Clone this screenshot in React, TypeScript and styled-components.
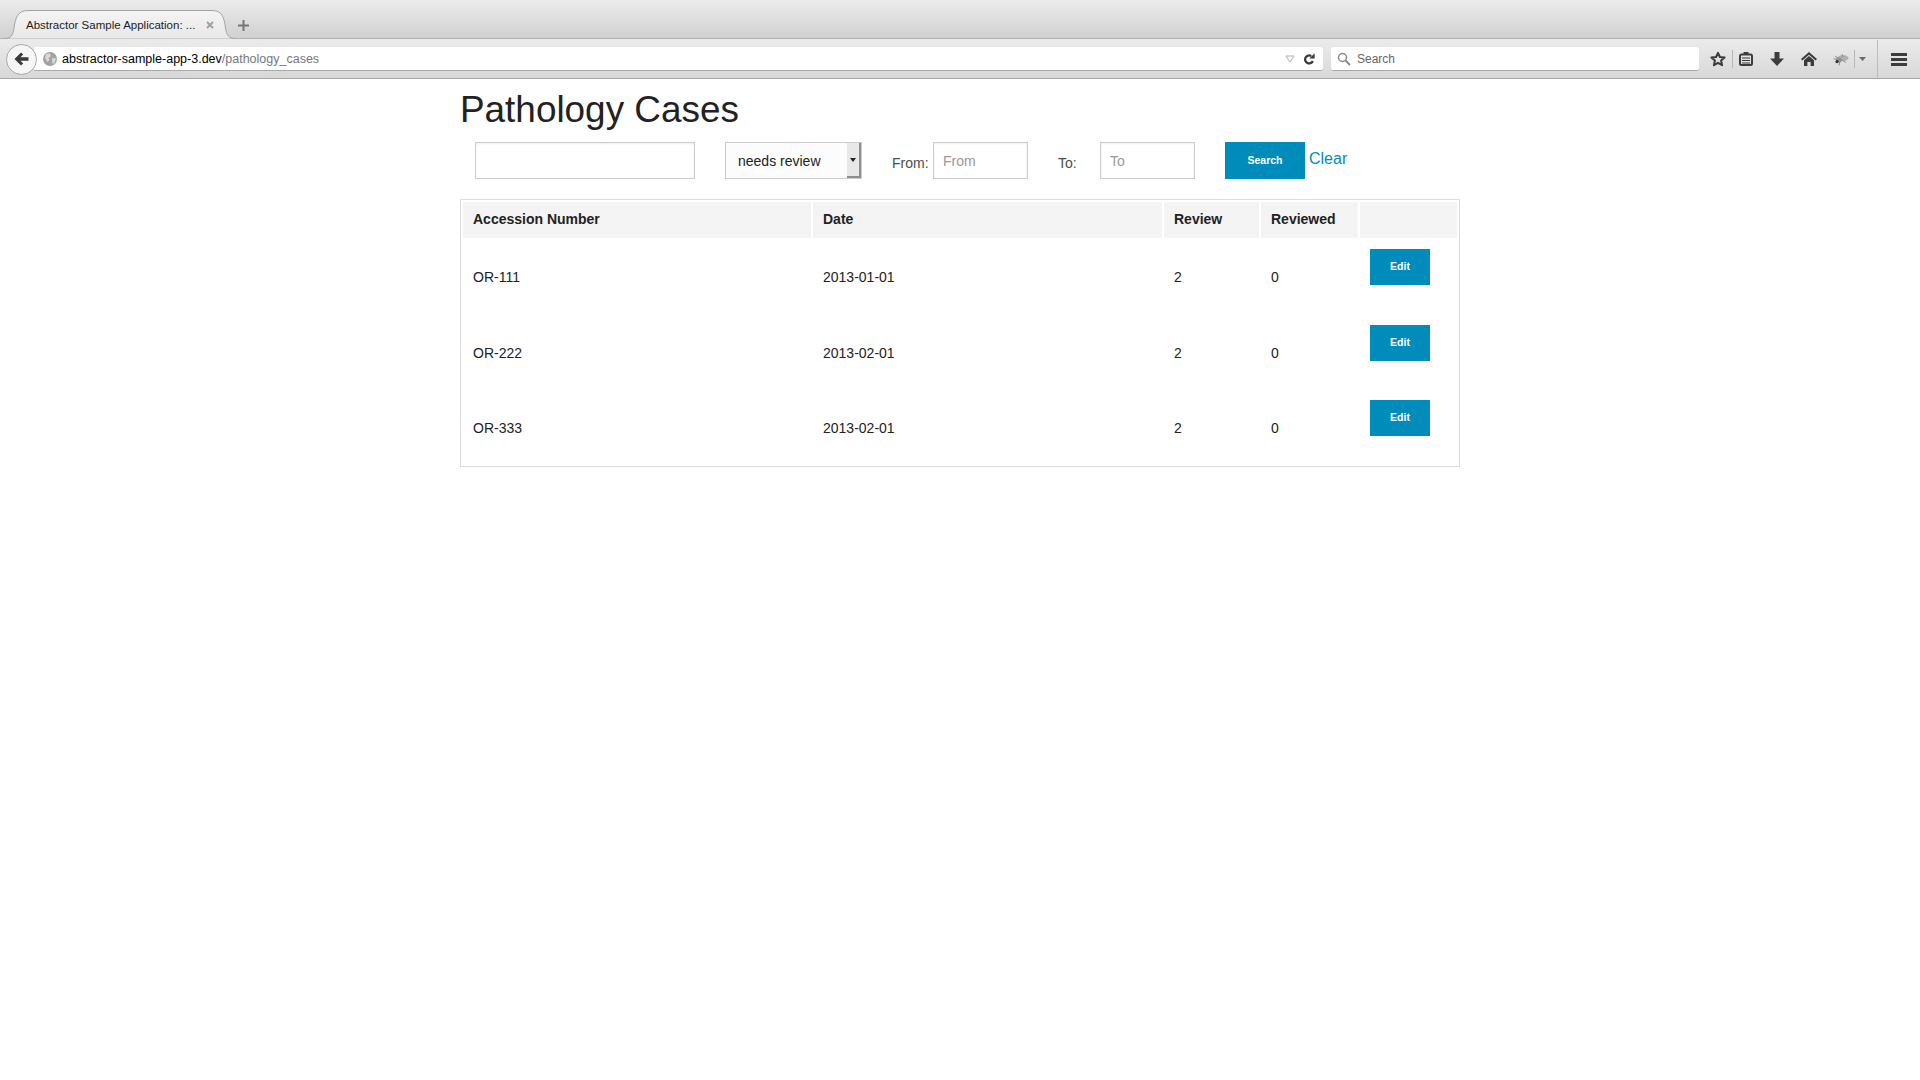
import React from 'react';
import styled, { createGlobalStyle } from 'styled-components';

const GlobalStyle = createGlobalStyle`
  html, body {
    margin: 0;
    padding: 0;
    background: #ffffff;
    font-family: "Liberation Sans", Arial, sans-serif;
  }
  * {
    box-sizing: border-box;
  }
`;

// --- Browser chrome ---

const TabStrip = styled.div`
  display: flex;
  align-items: flex-end;
  height: 39px;
  padding-left: 5px;
  background: linear-gradient(#ececec, #d0d0d0);
  border-bottom: 1px solid #b0b0b0;
`;

const Tab = styled.div`
  position: relative;
  display: flex;
  align-items: center;
  justify-content: space-between;
  width: 230px;
  height: 29px;
  margin-bottom: -1px;
  padding: 0 21px 0 21px;
  font-size: 11.5px;
  color: #222222;
`;

const TabShape = styled.svg`
  position: absolute;
  top: 0;
  left: 0;
`;

const TabLabel = styled.span`
  position: relative;
`;

const TabClose = styled.svg`
  position: relative;
`;

const NewTab = styled.svg`
  margin: 0 0 7px 3px;
`;

const Toolbar = styled.div`
  display: flex;
  align-items: center;
  height: 40px;
  padding: 1px 0 0 6px;
  background: linear-gradient(#ebebeb, #d8d8d8);
  border-bottom: 1px solid #a8a8a8;
`;

const BackButton = styled.div`
  position: relative;
  z-index: 1;
  display: flex;
  align-items: center;
  justify-content: center;
  flex: none;
  width: 31px;
  height: 31px;
  background: #f6f6f6;
  border: 1px solid #a9a9a9;
  border-radius: 50%;
`;

const UrlBar = styled.div`
  display: flex;
  align-items: center;
  flex: 1;
  height: 24px;
  margin-left: -3px;
  padding: 1px 8px 0 9px;
  background: #ffffff;
  border-bottom: 1px solid #a9a9a9;
  border-radius: 0 3px 3px 0;
  font-size: 12.5px;
`;

const UrlHost = styled.span`
  margin-left: 5px;
  color: #000000;
`;

const UrlPath = styled.span`
  flex: 1;
  color: #777777;
`;

const ReloadSlot = styled.span`
  display: flex;
  margin-left: 8px;
`;

const SearchBar = styled.div`
  display: flex;
  align-items: center;
  flex: none;
  gap: 6px;
  width: 368px;
  height: 24px;
  margin-left: 8px;
  padding: 1px 0 0 6px;
  font-size: 12px;
  color: #666666;
  background: #ffffff;
  border-bottom: 1px solid #a9a9a9;
  border-radius: 3px;
`;

const ToolIcons = styled.div`
  display: flex;
  align-items: center;
  align-self: stretch;
  flex: none;
  width: 221px;
  padding-left: 11px;
`;

const ToolIcon = styled.span<{ $width: number }>`
  display: flex;
  align-items: center;
  flex: none;
  width: ${({ $width }) => $width}px;
`;

const ToolDivider = styled.span<{ $right: number }>`
  flex: none;
  width: 1px;
  height: 18px;
  margin-right: ${({ $right }) => $right}px;
  background: #b8b8b8;
`;

const MenuDivider = styled.span`
  flex: none;
  align-self: stretch;
  width: 1px;
  margin-right: 13px;
  background: #bcbcbc;
`;

// --- Page ---

const Main = styled.main`
  width: 1000px;
  margin: 0 auto;
`;

const Title = styled.h1`
  margin: 0;
  height: 63px;
  padding-top: 9px;
  font-size: 36.9px;
  font-weight: normal;
  line-height: 44px;
  color: #222222;
`;

const FilterRow = styled.form`
  display: flex;
  align-items: flex-start;
  height: 57px;
  padding-left: 15px;
`;

const TextInput = styled.input<{ $width: number }>`
  width: ${({ $width }) => $width}px;
  height: 37px;
  padding: 0 9px;
  font-family: inherit;
  font-size: 14px;
  color: #222222;
  background: #ffffff;
  border: 1px solid #cccccc;
  box-shadow: inset 0 1px 2px rgba(0, 0, 0, 0.08);
  outline: none;
  &::placeholder {
    color: #999999;
    opacity: 1;
  }
`;

const SelectBox = styled.div`
  display: flex;
  justify-content: space-between;
  width: 137px;
  height: 37px;
  margin-left: 30px;
  background: #fcfcfc;
  border: 1px solid #cccccc;
  font-size: 14px;
  color: #222222;
`;

const SelectValue = styled.span`
  padding-left: 12px;
  line-height: 36px;
`;

const SelectArrow = styled.span`
  display: flex;
  align-items: center;
  justify-content: center;
  width: 14px;
  background: #e8e8e8;
  border-right: 2px solid #8e8e8e;
  border-bottom: 2px solid #8e8e8e;
  &::after {
    content: '';
    border-left: 3px solid transparent;
    border-right: 3px solid transparent;
    border-top: 4px solid #222222;
  }
`;

const FieldLabel = styled.label<{ $width: number; $left: number }>`
  width: ${({ $width }) => $width}px;
  margin-left: ${({ $left }) => $left}px;
  padding-top: 12px;
  font-size: 14px;
  line-height: 18px;
  color: #4d4d4d;
`;

const Button = styled.button<{ $width: number; $height: number }>`
  width: ${({ $width }) => $width}px;
  height: ${({ $height }) => $height}px;
  padding: 0 0 2px;
  font-family: inherit;
  font-size: 10.5px;
  font-weight: bold;
  color: #ffffff;
  background: #008cba;
  border: none;
`;

const SearchButton = styled(Button)`
  margin-left: 30px;
`;

const ClearLink = styled.a`
  margin-left: 4px;
  font-size: 16px;
  line-height: 34px;
  color: #008cba;
  text-decoration: none;
`;

const Table = styled.table`
  width: 1000px;
  table-layout: fixed;
  border: 1px solid #dddddd;
  border-collapse: separate;
  border-spacing: 2px;
  font-size: 14px;
  color: #222222;
`;

const Col = styled.col<{ $width?: number }>`
  width: ${({ $width }) => ($width ? `${$width}px` : 'auto')};
`;

const HeadCell = styled.th`
  height: 36px;
  padding: 0 10px 2px;
  text-align: left;
  font-weight: bold;
  background: #f4f4f4;
`;

const BodyCell = styled.td`
  height: 73px;
  padding: 9px 10px;
  vertical-align: middle;
  tr:first-child > & {
    height: 74px;
  }
`;

const ActionCell = styled(BodyCell)`
  vertical-align: top;
`;

// --- Icons ---

const BackIcon = () => (
  <svg width="15" height="14" viewBox="0 0 15 14">
    <path d="M7 0.5 L0.5 7 L7 13.5 L9.2 11.4 L6.4 8.8 H14.5 V5.2 H6.4 L9.2 2.6 Z" fill="#3a3a3a" />
  </svg>
);

const GlobeIcon = () => (
  <svg width="14" height="14" viewBox="0 0 14 14">
    <circle cx="7" cy="7" r="7" fill="#a3a3a3" />
    <path d="M3 2 L7 1.5 L8 4 L5.5 6 L6.5 8 L4.5 10 L2 6 Z M9 6 L13 6.5 L11.5 11 L9.5 12 Z" fill="#d9d9d9" />
  </svg>
);

const DropTriangle = () => (
  <svg width="10" height="8" viewBox="0 0 10 8">
    <path d="M1 1 H9 L5 7 Z" fill="none" stroke="#b0b0b0" />
  </svg>
);

const ReloadIcon = () => (
  <svg width="12" height="12" viewBox="0 0 12 12">
    <path d="M9.8 8 A4 4 0 1 1 8.2 3" fill="none" stroke="#3a3a3a" strokeWidth="2.3" />
    <path d="M6.4 5.4 H11.6 V0.2 Z" fill="#3a3a3a" />
  </svg>
);

const MagnifierIcon = () => (
  <svg width="14" height="14" viewBox="0 0 14 14">
    <circle cx="5.5" cy="5.5" r="4" fill="none" stroke="#8a8a8a" strokeWidth="1.5" />
    <path d="M8.5 8.5 L13 13" stroke="#8a8a8a" strokeWidth="2" />
  </svg>
);

const StarIcon = () => (
  <svg width="16" height="16" viewBox="0 0 16 16">
    <path d="M8 1.8 L9.9 6 L14.6 6.5 L11.1 9.6 L12.1 14.2 L8 11.8 L3.9 14.2 L4.9 9.6 L1.4 6.5 L6.1 6 Z" fill="none" stroke="#3c3c3c" strokeWidth="2" strokeLinejoin="round" />
  </svg>
);

const ClipboardIcon = () => (
  <svg width="14" height="14" viewBox="0 0 14 14">
    <rect x="1" y="2.5" width="12" height="10.5" rx="1.5" fill="none" stroke="#3c3c3c" strokeWidth="2" />
    <rect x="4.5" y="0" width="5" height="3" fill="#3c3c3c" />
    <path d="M3 6 H11 M3 8.5 H11 M3 11 H11" stroke="#3c3c3c" strokeWidth="1.1" />
  </svg>
);

const DownloadIcon = () => (
  <svg width="14" height="14" viewBox="0 0 14 14">
    <path d="M4.5 0 H9.5 V6.5 H14 L7 14 L0 6.5 H4.5 Z" fill="#3c3c3c" />
  </svg>
);

const HomeIcon = () => (
  <svg width="16" height="14" viewBox="0 0 16 14">
    <path d="M8 0 L16 7 L14.6 8.4 L8 2.8 L1.4 8.4 L0 7 Z" fill="#3c3c3c" />
    <path d="M8 4 L13 8.3 V14 H9.6 V10 H6.4 V14 H3 V8.3 Z" fill="#3c3c3c" />
  </svg>
);

const BugIcon = () => (
  <svg width="16" height="13" viewBox="0 0 16 13">
    <ellipse cx="10" cy="5" rx="5.5" ry="3" fill="#b0b0b0" />
    <ellipse cx="6" cy="7" rx="3" ry="2.4" fill="#949494" />
    <circle cx="4" cy="8.6" r="1.6" fill="#303030" />
    <path d="M2 3 L7 6 M0.5 6 H4 M6 12.5 L7 8 M9 1 L10 4 M13 9.5 L9 7" stroke="#8e8e8e" />
  </svg>
);

const SmallCaret = () => (
  <svg width="7" height="4" viewBox="0 0 7 4">
    <path d="M0 0 H7 L3.5 4 Z" fill="#6a6a6a" />
  </svg>
);

const MenuIcon = () => (
  <svg width="16" height="13" viewBox="0 0 16 13">
    <path d="M0 1.5 H16 M0 6.5 H16 M0 11.5 H16" stroke="#3c3c3c" strokeWidth="3" />
  </svg>
);

// --- Data ---

const cases = [
  { accession: 'OR-111', date: '2013-01-01', review: 2, reviewed: 0 },
  { accession: 'OR-222', date: '2013-02-01', review: 2, reviewed: 0 },
  { accession: 'OR-333', date: '2013-02-01', review: 2, reviewed: 0 },
];

const App: React.FC = () => (
  <>
    <GlobalStyle />
    <TabStrip>
      <Tab>
        <TabShape width="230" height="29" viewBox="0 0 230 29">
          <defs>
            <linearGradient id="tabFill" x1="0" y1="0" x2="0" y2="1">
              <stop offset="0" stopColor="#f4f4f4" />
              <stop offset="1" stopColor="#e8e8e8" />
            </linearGradient>
          </defs>
          <path
            d="M0 28.5 C6 28.5 8 25 9 18 C10.5 7 13 0.5 23 0.5 H207 C217 0.5 219 7 220.5 18 C221.5 25 224 28.5 230 28.5"
            fill="url(#tabFill)"
            stroke="#a4a4a4"
          />
        </TabShape>
        <TabLabel>Abstractor Sample Application: ...</TabLabel>
        <TabClose width="8" height="8" viewBox="0 0 8 8">
          <path d="M1 1 L7 7 M7 1 L1 7" stroke="#a0a0a0" strokeWidth="2" />
        </TabClose>
      </Tab>
      <NewTab width="11" height="11" viewBox="0 0 11 11">
        <path d="M5.5 0 V11 M0 5.5 H11" stroke="#777777" strokeWidth="2" />
      </NewTab>
    </TabStrip>
    <Toolbar>
      <BackButton>
        <BackIcon />
      </BackButton>
      <UrlBar>
        <GlobeIcon />
        <UrlHost>abstractor-sample-app-3.dev</UrlHost>
        <UrlPath>/pathology_cases</UrlPath>
        <DropTriangle />
        <ReloadSlot>
          <ReloadIcon />
        </ReloadSlot>
      </UrlBar>
      <SearchBar>
        <MagnifierIcon />
        Search
      </SearchBar>
      <ToolIcons>
        <ToolIcon $width={22}><StarIcon /></ToolIcon>
        <ToolDivider $right={6} />
        <ToolIcon $width={31}><ClipboardIcon /></ToolIcon>
        <ToolIcon $width={31}><DownloadIcon /></ToolIcon>
        <ToolIcon $width={32}><HomeIcon /></ToolIcon>
        <ToolIcon $width={21}><BugIcon /></ToolIcon>
        <ToolDivider $right={4} />
        <ToolIcon $width={18}><SmallCaret /></ToolIcon>
        <MenuDivider />
        <ToolIcon $width={16}><MenuIcon /></ToolIcon>
      </ToolIcons>
    </Toolbar>
    <Main>
      <Title>Pathology Cases</Title>
      <FilterRow>
        <TextInput $width={220} />
        <SelectBox>
          <SelectValue>needs review</SelectValue>
          <SelectArrow />
        </SelectBox>
        <FieldLabel $width={41} $left={30}>From:</FieldLabel>
        <TextInput $width={95} placeholder="From" />
        <FieldLabel $width={42} $left={30}>To:</FieldLabel>
        <TextInput $width={95} placeholder="To" />
        <SearchButton $width={80} $height={37}>Search</SearchButton>
        <ClearLink href="#">Clear</ClearLink>
      </FilterRow>
      <Table>
        <colgroup>
          <Col $width={348} />
          <Col $width={349} />
          <Col $width={95} />
          <Col $width={97} />
          <Col />
        </colgroup>
        <thead>
          <tr>
            <HeadCell>Accession Number</HeadCell>
            <HeadCell>Date</HeadCell>
            <HeadCell>Review</HeadCell>
            <HeadCell>Reviewed</HeadCell>
            <HeadCell />
          </tr>
        </thead>
        <tbody>
          {cases.map((c) => (
            <tr key={c.accession}>
              <BodyCell>{c.accession}</BodyCell>
              <BodyCell>{c.date}</BodyCell>
              <BodyCell>{c.review}</BodyCell>
              <BodyCell>{c.reviewed}</BodyCell>
              <ActionCell>
                <Button $width={60} $height={36}>Edit</Button>
              </ActionCell>
            </tr>
          ))}
        </tbody>
      </Table>
    </Main>
  </>
);

export default App;
